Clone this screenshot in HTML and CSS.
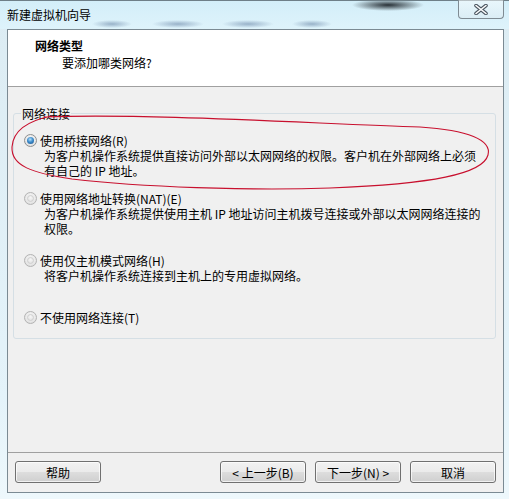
FILE: index.html
```html
<!DOCTYPE html>
<html lang="zh-CN">
<head>
    <meta charset="UTF-8">
    <meta name="viewport" content="width=device-width, initial-scale=1.0">
    <title>新建虚拟机向导</title>
    <link rel="stylesheet" href="styles.css">
</head>
<body>
    <div class="window">
        <!-- 标题栏 -->
        <div class="titlebar">
            <div class="title">新建虚拟机向导</div>
            <div class="close">
                <svg width="14" height="11" viewBox="0 0 14 11">
                    <path d="M2 1.5 L12 9.5 M12 1.5 L2 9.5" stroke="#4a5560" stroke-width="3.6" stroke-linecap="round"/>
                    <path d="M2 1.5 L12 9.5 M12 1.5 L2 9.5" stroke="#ffffff" stroke-width="1.6" stroke-linecap="round"/>
                </svg>
            </div>
        </div>

        <div class="dialog">
            <div class="header">
                <div class="header-title">网络类型</div>
                <div class="header-sub">要添加哪类网络?</div>
            </div>

            <div class="main">
                <fieldset class="group">
                    <legend>网络连接</legend>

                    <div class="option first">
                        <div class="option-label"><span class="radio checked"></span>使用桥接网络(R)</div>
                        <div class="option-desc">为客户机操作系统提供直接访问外部以太网网络的权限。客户机在外部网络上必须<br>有自己的 IP 地址。</div>
                    </div>

                    <div class="option second">
                        <div class="option-label"><span class="radio"></span>使用网络地址转换(NAT)(E)</div>
                        <div class="option-desc">为客户机操作系统提供使用主机 IP 地址访问主机拨号连接或外部以太网网络连接的<br>权限。</div>
                    </div>

                    <div class="option third">
                        <div class="option-label"><span class="radio"></span>使用仅主机模式网络(H)</div>
                        <div class="option-desc">将客户机操作系统连接到主机上的专用虚拟网络。</div>
                    </div>

                    <div class="option fourth">
                        <div class="option-label"><span class="radio"></span>不使用网络连接(T)</div>
                    </div>
                </fieldset>
            </div>

            <div class="footer">
                <button class="btn">帮助</button>
                <div class="spacer"></div>
                <button class="btn">&lt; 上一步(B)</button>
                <button class="btn">下一步(N) &gt;</button>
                <button class="btn">取消</button>
            </div>
        </div>

        <!-- 红色手绘圈 -->
        <svg class="mark" width="509" height="499" viewBox="0 0 509 499">
            <path d="M44 117 C150 113 320 124 420 127 C468 130 492 140 488 155 C483 174 432 184 330 188 C250 191 140 187 72 179 C32 173 11 166 12 147 C13 131 26 121 52 116"
                  fill="none" stroke="#c8102e" stroke-width="1.1"/>
        </svg>
    </div>
</body>
</html>
```

FILE: styles.css
```css
* {
    margin: 0;
    padding: 0;
    box-sizing: border-box;
}

html,
body {
    width: 100%;
    height: 100%;
}

body {
    background: #e6f4fa;
    font-family: "Noto Sans CJK SC", "Noto Sans", sans-serif;
    font-size: 12px;
    line-height: 15px;
    color: #000;
}

.window {
    position: relative;
    width: 509px;
    height: 499px;
    background: linear-gradient(#dcecf3, #e4f3fa 80%, #eef8fc);
}

/* 标题栏 */
.titlebar {
    height: 29px;
    display: flex;
    justify-content: space-between;
    align-items: flex-start;
    border-top: 1px solid #6e7f88;
    background:
        radial-gradient(ellipse 36px 6px at 388px 4px, rgba(10, 15, 20, 0.85), rgba(10, 15, 20, 0) 100%),
        radial-gradient(ellipse 20px 4px at 112px 23px, rgba(70, 100, 140, 0.45), rgba(70, 100, 140, 0) 100%),
        radial-gradient(ellipse 26px 4px at 178px 23px, rgba(70, 100, 140, 0.45), rgba(70, 100, 140, 0) 100%),
        radial-gradient(ellipse 26px 4px at 248px 23px, rgba(70, 100, 140, 0.45), rgba(70, 100, 140, 0) 100%),
        radial-gradient(ellipse 20px 4px at 312px 23px, rgba(70, 100, 140, 0.45), rgba(70, 100, 140, 0) 100%),
        linear-gradient(#d3eef9, #def3fb);
}

.title {
    padding: 6px 0 0 7px;
    color: #000;
}

.close {
    width: 46px;
    height: 19px;
    margin-right: 5px;
    margin-top: -1px;
    border: 1px solid #7f8b93;
    border-top: none;
    border-radius: 0 0 4px 4px;
    background: linear-gradient(rgba(255, 255, 255, 0.5), rgba(220, 235, 242, 0.6));
    display: flex;
    justify-content: center;
    align-items: center;
}

/* 对话框主体 */
.dialog {
    margin-left: 7px;
    width: 497px;
    height: 464px;
    border: 1px solid #7b8a93;
    display: flex;
    flex-direction: column;
    background: #f0f0f0;
}

.header {
    height: 57px;
    background: #fff;
    border-bottom: 1px solid #a0a0a0;
    padding: 8px 0 0 27px;
}

.header-title {
    font-weight: bold;
}

.header-sub {
    margin-top: 2px;
    padding-left: 27px;
}

.main {
    height: 365px;
    padding: 19px 7px 0 5px;
}

.group {
    border: 1px solid #d5dfe5;
    border-radius: 3px;
    padding: 12px 8px 13px 7px;
}

.group legend {
    padding: 0 1px;
    line-height: 15px;
}

.option {
    white-space: nowrap;
}

.second {
    margin-top: 13px;
}

.third {
    margin-top: 17px;
}

.fourth {
    margin-top: 27px;
}

.option-label {
    display: flex;
    align-items: center;
}

.option-desc {
    padding-left: 23px;
}

.radio {
    width: 13px;
    height: 13px;
    margin: 0 3px 0 3px;
    border-radius: 50%;
    border: 1px solid #b3b3b3;
    background: radial-gradient(circle at 50% 40%, #fbfbfb 0%, #e9e9e9 55%, #d6d6d6 100%);
    position: relative;
    flex-shrink: 0;
}

.radio::after {
    content: "";
    position: absolute;
    left: 2px;
    top: 2px;
    width: 7px;
    height: 7px;
    border-radius: 50%;
    background: radial-gradient(circle at 50% 35%, #f6f6f6, #dedede);
    border: 1px solid #cfcfcf;
    box-sizing: border-box;
}

.radio.checked {
    border-color: #8e8f8f;
}

.radio.checked::after {
    border: none;
    background: radial-gradient(circle at 45% 35%, #b8e2fb 0%, #3d8ccc 45%, #1a4f86 100%);
}

/* 底部按钮 */
.footer {
    height: 40px;
    border-top: 1px solid #a0a0a0;
    padding: 8px 7px 0 7px;
    display: flex;
    align-items: flex-start;
    gap: 9px;
}

.spacer {
    flex: 1;
}

.btn {
    width: 86px;
    height: 22px;
    border: 1px solid #707070;
    border-radius: 3px;
    background: linear-gradient(#f2f2f2 0%, #ebebeb 48%, #dddddd 52%, #cfcfcf 100%);
    font-family: "Noto Sans CJK SC", "Noto Sans", sans-serif;
    font-size: 12px;
    line-height: 15px;
    color: #000;
    box-shadow: inset 0 0 0 1px rgba(255, 255, 255, 0.7);
}

.btn:focus {
    outline: none;
}

/* 标注 */
.mark {
    position: absolute;
    left: 0;
    top: 0;
    pointer-events: none;
}
```
